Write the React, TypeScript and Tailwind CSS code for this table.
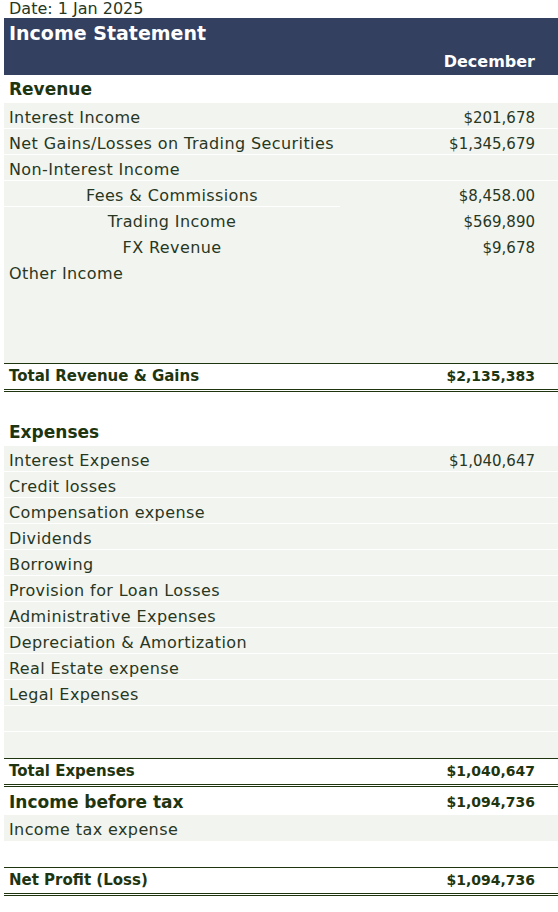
import React from "react";

type RowProps = {
  label?: string;
  value?: string;
  center?: boolean;
  sep?: boolean;
  sepValue?: boolean;
};

function Row({ label = "", value = "", center = false, sep = true, sepValue = true }: RowProps) {
  return (
    <div className="flex h-[26px] bg-[#f2f4ef]">
      <div
        className={`flex w-[336px] items-end border-b ${sep ? "border-white" : "border-[#f2f4ef]"} ${
          center ? "justify-center" : "pl-[5px]"
        }`}
      >
        <span className="whitespace-nowrap text-[16px] leading-[20px] tracking-[0.4px]">{label}</span>
      </div>
      <div
        className={`flex flex-1 items-end justify-end border-b pr-[23px] ${
          sep && sepValue ? "border-white" : "border-[#f2f4ef]"
        }`}
      >
        <span className="whitespace-nowrap text-[15px] leading-[20px]">{value}</span>
      </div>
    </div>
  );
}

function Heading({ children }: { children: React.ReactNode }) {
  return (
    <div className="flex h-[28px] items-center pl-[5px] text-[17px] font-bold leading-[28px] text-[#1e3510]">
      {children}
    </div>
  );
}

function TotalRow({ label, value }: { label: string; value: string }) {
  return (
    <div className="flex h-[29px] items-center justify-between border-t border-b-[3px] border-double border-[#1e3510] bg-white pl-[5px] pr-[23px] font-bold text-[#1e3510]">
      <span className="text-[15px] leading-[25px]">{label}</span>
      <span className="text-[14px] leading-[25px]">{value}</span>
    </div>
  );
}

export default function App() {
  return (
    <div className="min-h-[912px] w-[558px] bg-white font-['DejaVu_Sans',sans-serif] text-[#28371f]">
      <div className="h-[18px] pl-[9px]">
        <div className="text-[16px] leading-[18px]">Date: 1 Jan 2025</div>
      </div>
      <div className="pl-[4px]">
        <div className="h-[57px] bg-[#33405f] font-bold text-white">
          <div className="pl-[5px] pt-[4px] text-[19px] leading-[22px]">Income Statement</div>
          <div className="mt-[8px] pr-[23px] text-right text-[16px] leading-[20px]">December</div>
        </div>

        <Heading>Revenue</Heading>
        <Row label="Interest Income" value="$201,678" />
        <Row label="Net Gains/Losses on Trading Securities" value="$1,345,679" />
        <Row label="Non-Interest Income" />
        <Row label="Fees & Commissions" value="$8,458.00" center sepValue={false} />
        <Row label="Trading Income" value="$569,890" center sep={false} />
        <Row label="FX Revenue" value="$9,678" center sep={false} />
        <Row label="Other Income" sep={false} />
        <div className="h-[78px] bg-[#f2f4ef]" />
        <TotalRow label="Total Revenue & Gains" value="$2,135,383" />

        <div className="h-[26px]" />
        <Heading>Expenses</Heading>
        <Row label="Interest Expense" value="$1,040,647" />
        <Row label="Credit losses" />
        <Row label="Compensation expense" />
        <Row label="Dividends" />
        <Row label="Borrowing" />
        <Row label="Provision for Loan Losses" />
        <Row label="Administrative Expenses" />
        <Row label="Depreciation & Amortization" />
        <Row label="Real Estate expense" />
        <Row label="Legal Expenses" />
        <Row />
        <Row sep={false} />
        <TotalRow label="Total Expenses" value="$1,040,647" />

        <div className="flex h-[28px] items-center justify-between pl-[5px] pr-[23px] pt-[1px] font-bold text-[#1e3510]">
          <span className="text-[17px] leading-[26px]">Income before tax</span>
          <span className="text-[14px] leading-[26px]">$1,094,736</span>
        </div>
        <Row label="Income tax expense" sep={false} />
        <div className="h-[26px]" />
        <TotalRow label="Net Profit (Loss)" value="$1,094,736" />
      </div>
    </div>
  );
}
